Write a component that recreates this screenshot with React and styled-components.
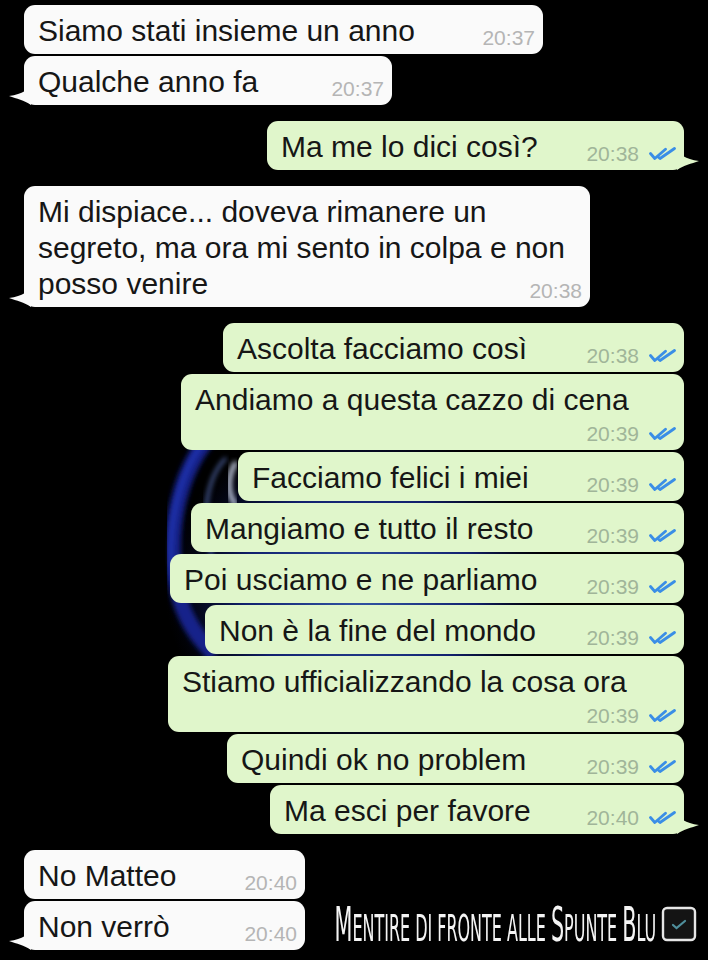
import React from "react";
import styled, { createGlobalStyle, css } from "styled-components";

const GlobalStyle = createGlobalStyle`
  html, body {
    margin: 0;
    padding: 0;
    background: #000;
  }
`;

const groups = [
  {
    side: "in",
    items: [
      { text: "Siamo stati insieme un anno", time: "20:37", w: 519 },
      { text: "Qualche anno fa", time: "20:37", w: 368 },
    ],
  },
  {
    side: "out",
    items: [{ text: "Ma me lo dici così?", time: "20:38", w: 417 }],
  },
  {
    side: "in",
    items: [
      {
        lines: [
          "Mi dispiace... doveva rimanere un",
          "segreto, ma ora mi sento in colpa e non",
          "posso venire",
        ],
        time: "20:38",
        w: 566,
      },
    ],
  },
  {
    side: "out",
    items: [
      { text: "Ascolta facciamo così", time: "20:38", w: 461 },
      { text: "Andiamo a questa cazzo di cena", time: "20:39", w: 503, stacked: true },
      { text: "Facciamo felici i miei", time: "20:39", w: 446 },
      { text: "Mangiamo e tutto il resto", time: "20:39", w: 493 },
      { text: "Poi usciamo e ne parliamo", time: "20:39", w: 514 },
      { text: "Non è la fine del mondo", time: "20:39", w: 479 },
      { text: "Stiamo ufficializzando la cosa ora", time: "20:39", w: 516, stacked: true },
      { text: "Quindi ok no problem", time: "20:39", w: 457 },
      { text: "Ma esci per favore", time: "20:40", w: 414 },
    ],
  },
];

const lastGroup = [
  { text: "No Matteo", time: "20:40", w: 281 },
  { text: "Non verrò", time: "20:40", w: 281 },
];

function Ticks() {
  return (
    <TickIcon width="27" height="13" viewBox="0 0 27 13" fill="none">
      <path
        d="M1.5 6.5 L5.8 11.5 L16.5 2.2"
        stroke="#3a8ee6"
        strokeWidth="2.8"
        strokeLinecap="round"
        strokeLinejoin="round"
      />
      <path
        d="M9.2 10 L11 11.5 L25.5 1.5"
        stroke="#3a8ee6"
        strokeWidth="2.8"
        strokeLinecap="round"
        strokeLinejoin="round"
      />
    </TickIcon>
  );
}

function Message({ msg, side, tail }) {
  const out = side === "out";
  return (
    <Bubble $out={out} $tail={tail} style={{ width: msg.w }}>
      <Text>
        {msg.lines
          ? msg.lines.map((l, i) => (
              <React.Fragment key={i}>
                {l}
                {i < msg.lines.length - 1 && <br />}
              </React.Fragment>
            ))
          : msg.text}
      </Text>
      <Meta $stacked={msg.stacked}>
        <Time $out={out}>{msg.time}</Time>
        {out && <Ticks />}
      </Meta>
    </Bubble>
  );
}

function Backdrop() {
  return (
    <Swirl viewBox="0 0 708 960" width="708" height="960">
      <defs>
        <radialGradient id="glow" cx="0.5" cy="0.5" r="0.5">
          <stop offset="0" stopColor="#3f6cd0" />
          <stop offset="0.6" stopColor="#15288a" />
          <stop offset="1" stopColor="#050a30" stopOpacity="0" />
        </radialGradient>
        <filter id="soft">
          <feGaussianBlur stdDeviation="2.5" />
        </filter>
      </defs>
      <ellipse cx="360" cy="590" rx="195" ry="170" fill="url(#glow)" opacity="0.8" />
      <path
        d="M228 420 C178 455 162 540 180 600 C188 625 200 640 215 655"
        stroke="#14208a"
        strokeWidth="16"
        fill="none"
        filter="url(#soft)"
      />
      <path
        d="M222 424 C176 458 164 540 174 585"
        stroke="#2c48d8"
        strokeWidth="2.5"
        fill="none"
        filter="url(#soft)"
        opacity="0.8"
      />
      <path
        d="M226 458 C206 478 200 520 212 556"
        stroke="#6f8fe8"
        strokeWidth="3"
        fill="none"
        filter="url(#soft)"
        opacity="0.7"
      />
      <path
        d="M236 462 C226 478 228 496 236 505"
        stroke="#dfe8ff"
        strokeWidth="5"
        fill="none"
        filter="url(#soft)"
        opacity="0.85"
      />
    </Swirl>
  );
}

function App() {
  return (
    <>
      <GlobalStyle />
      <Page>
        <Backdrop />
        <Chat>
          {groups.map((g, gi) => (
            <Group key={gi} $side={g.side}>
              {g.items.map((m, i) => (
                <Message key={i} msg={m} side={g.side} tail={i === g.items.length - 1} />
              ))}
            </Group>
          ))}
          <Footer>
            <Group $side="in">
              {lastGroup.map((m, i) => (
                <Message key={i} msg={m} side="in" tail={i === lastGroup.length - 1} />
              ))}
            </Group>
            <Caption>
              <CaptionBox>
                <CaptionText>
                  <Big>M</Big>ENTIRE DI FRONTE ALLE <Big>S</Big>PUNTE <Big>B</Big>LU
                </CaptionText>
              </CaptionBox>
              <CheckBox viewBox="0 0 36 36" width="36" height="36">
                <rect x="2" y="2" width="32" height="32" rx="4" fill="#141414" stroke="#e6e6e6" strokeWidth="2.4" />
                <path d="M12 19 L15.5 22 L24 15" stroke="#4f8f9c" strokeWidth="2.2" fill="none" strokeLinecap="round" />
              </CheckBox>
            </Caption>
          </Footer>
        </Chat>
      </Page>
    </>
  );
}

const Page = styled.div`
  position: relative;
  width: 708px;
  height: 960px;
  overflow: hidden;
  background: #000;
  font-family: "Liberation Sans", Arial, sans-serif;
`;

const Swirl = styled.svg`
  position: absolute;
  top: 0;
  left: 0;
  z-index: 0;
`;

const Chat = styled.div`
  position: relative;
  z-index: 1;
  display: flex;
  flex-direction: column;
  gap: 16px;
  padding: 5px 24px 0;
`;

const Group = styled.div`
  display: flex;
  flex-direction: column;
  align-items: ${(p) => (p.$side === "out" ? "flex-end" : "flex-start")};
  gap: 2px;
`;

const Bubble = styled.div`
  position: relative;
  box-sizing: border-box;
  display: grid;
  grid-template-columns: 1fr;
  padding: 8px 8px 5px 14px;
  border-radius: 11px;
  background: ${(p) => (p.$out ? "#e0f6cb" : "#fafafa")};
  color: #161616;

  ${(p) =>
    p.$tail &&
    css`
      &::after {
        content: "";
        position: absolute;
        bottom: 0;
        width: 22px;
        height: 24px;
        background: inherit;
        ${p.$out
          ? css`
              right: -15px;
              clip-path: path("M0 0 C2 9 8 13 22 15 C14 18 7 19 0 24 Z");
            `
          : css`
              left: -15px;
              clip-path: path("M22 0 C20 9 14 13 0 15 C8 18 15 19 22 24 Z");
            `}
      }
    `}
`;

const Text = styled.div`
  grid-area: 1 / 1;
  font-size: 30px;
  line-height: 36px;
  white-space: nowrap;
`;

const Meta = styled.div`
  grid-area: ${(p) => (p.$stacked ? "2 / 1" : "1 / 1")};
  justify-self: end;
  align-self: end;
  display: flex;
  align-items: flex-end;
  gap: 10px;
  height: ${(p) => (p.$stacked ? "27px" : "auto")};
`;

const Time = styled.span`
  font-size: 21px;
  line-height: 21px;
  color: ${(p) => (p.$out ? "#a0b599" : "#b5b5b5")};
  transform: translateY(-1px);
`;

const TickIcon = styled.svg`
  flex-shrink: 0;
  margin-bottom: 5px;
`;

const Footer = styled.div`
  display: flex;
  justify-content: space-between;
  align-items: flex-end;
  margin-right: -13px;
`;

const Caption = styled.div`
  display: flex;
  align-items: center;
  gap: 5px;
  margin-bottom: 2px;
`;

const CaptionBox = styled.div`
  width: 322px;
  display: flex;
  justify-content: flex-end;
`;

const CaptionText = styled.span`
  flex-shrink: 0;
  font-family: "Liberation Sans Narrow", "DejaVu Sans Condensed", sans-serif;
  font-size: 37px;
  line-height: 1;
  color: #f4f4f4;
  white-space: nowrap;
  transform: scaleX(0.48);
  transform-origin: right center;
`;

const Big = styled.span`
  font-size: 48px;
`;

const CheckBox = styled.svg`
  flex-shrink: 0;
`;

export default App;
